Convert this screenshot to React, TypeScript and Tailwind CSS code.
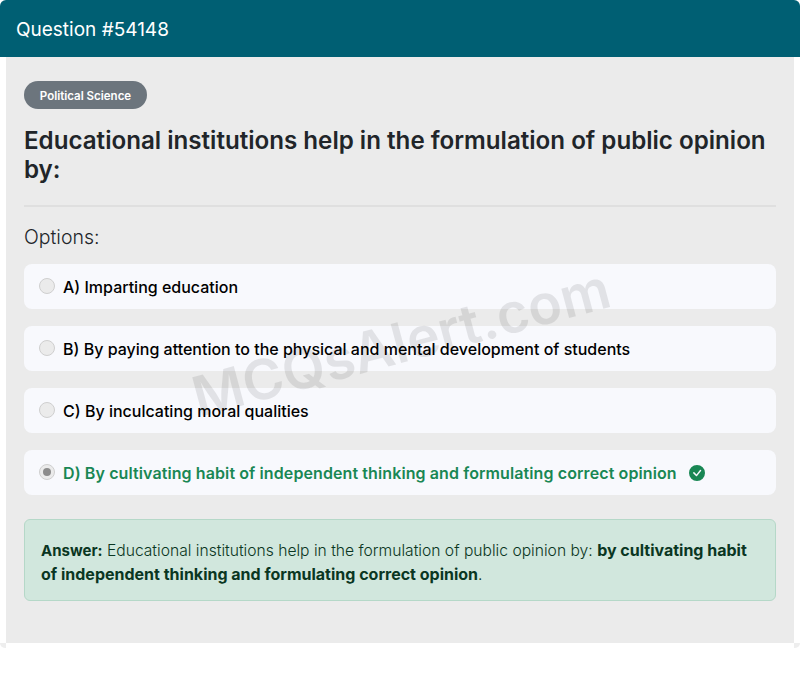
const font = { fontFamily: 'Inter, sans-serif' };

function Radio({ checked }: { checked?: boolean }) {
  return (
    <span className="flex h-4 w-4 shrink-0 -translate-y-px items-center justify-center rounded-full border border-[#cfcfcf] bg-[#ebebeb]">
      {checked && <span className="h-2 w-2 rounded-full bg-[#8c8c8c]" />}
    </span>
  );
}

function Option({ text }: { text: string }) {
  return (
    <div className="flex h-[45px] items-center gap-2 rounded-lg bg-[#f8f9fd] pl-[15px]">
      <Radio />
      <span className="text-[16px] font-medium text-black">{text}</span>
    </div>
  );
}

export default function App() {
  return (
    <div className="relative h-[674px] w-[800px] overflow-hidden bg-white" style={font}>
      <div className="flex h-[57px] items-center rounded-t-md bg-[#005f73] px-4 pt-1">
        <h1 className="text-[19px] font-normal text-white">Question #54148</h1>
      </div>
      <div className="relative mx-1.5 flex h-[586px] flex-col bg-[#ebebeb] px-[18px] pt-6">
        <span className="flex h-7 w-[123px] items-center justify-center rounded-full bg-[#6c757d] pt-1 text-[11.5px] font-semibold text-white">
          Political Science
        </span>
        <h2 className="mt-[17px] text-[24.15px] leading-[29px] font-semibold text-[#212529]">
          Educational institutions help in the formulation of public opinion by:
        </h2>
        <div className="mt-[21px] h-0.5 bg-[#dfdfdf]" />
        <p className="mt-[18px] text-[19.5px] leading-6 font-light text-[#212529]">Options:</p>
        <div className="mt-[15px] flex flex-col gap-[17px]">
          <Option text="A) Imparting education" />
          <Option text="B) By paying attention to the physical and mental development of students" />
          <Option text="C) By inculcating moral qualities" />
          <div className="flex h-[45px] items-center gap-2 rounded-lg bg-[#f8f9fd] pl-[15px]">
            <Radio checked />
            <span className="text-[16px] font-semibold tracking-[0.1px] text-[#198754]">
              D) By cultivating habit of independent thinking and formulating correct opinion
            </span>
            <svg viewBox="0 0 16 16" className="ml-1 h-4 w-4 fill-[#198754]">
              <path d="M16 8A8 8 0 1 1 0 8a8 8 0 0 1 16 0zm-3.97-3.03a.75.75 0 0 0-1.08.02L7.477 9.417 5.384 7.323a.75.75 0 0 0-1.06 1.06L6.97 11.03a.75.75 0 0 0 1.079-.02l3.992-4.99a.75.75 0 0 0-.01-1.05z" />
            </svg>
          </div>
        </div>
        <div className="mt-6 h-[82px] rounded-md border border-[#b5d8c8] bg-[#d1e7dd] px-4 pt-[19px] text-[15.65px] leading-[23.5px] font-light text-[#0a3622]">
          <strong className="text-[15px] font-bold">Answer:</strong> Educational institutions help in the formulation of public opinion by:{" "}
          <strong className="text-[16px] font-bold">by cultivating habit of independent thinking and formulating correct opinion</strong>.
        </div>
      </div>
      <div className="flex justify-between">
        <div className="h-[5px] w-1.5 rounded-bl-md bg-[#eeeeee]" />
        <div className="h-[5px] w-1.5 rounded-br-md bg-[#eeeeee]" />
      </div>
      <div className="pointer-events-none absolute top-[342px] left-[401px] -translate-x-1/2 -translate-y-1/2 -rotate-[15deg] text-[55.5px] font-semibold whitespace-nowrap text-black/[0.09]">
        MCQsAlert.com
      </div>
    </div>
  );
}
